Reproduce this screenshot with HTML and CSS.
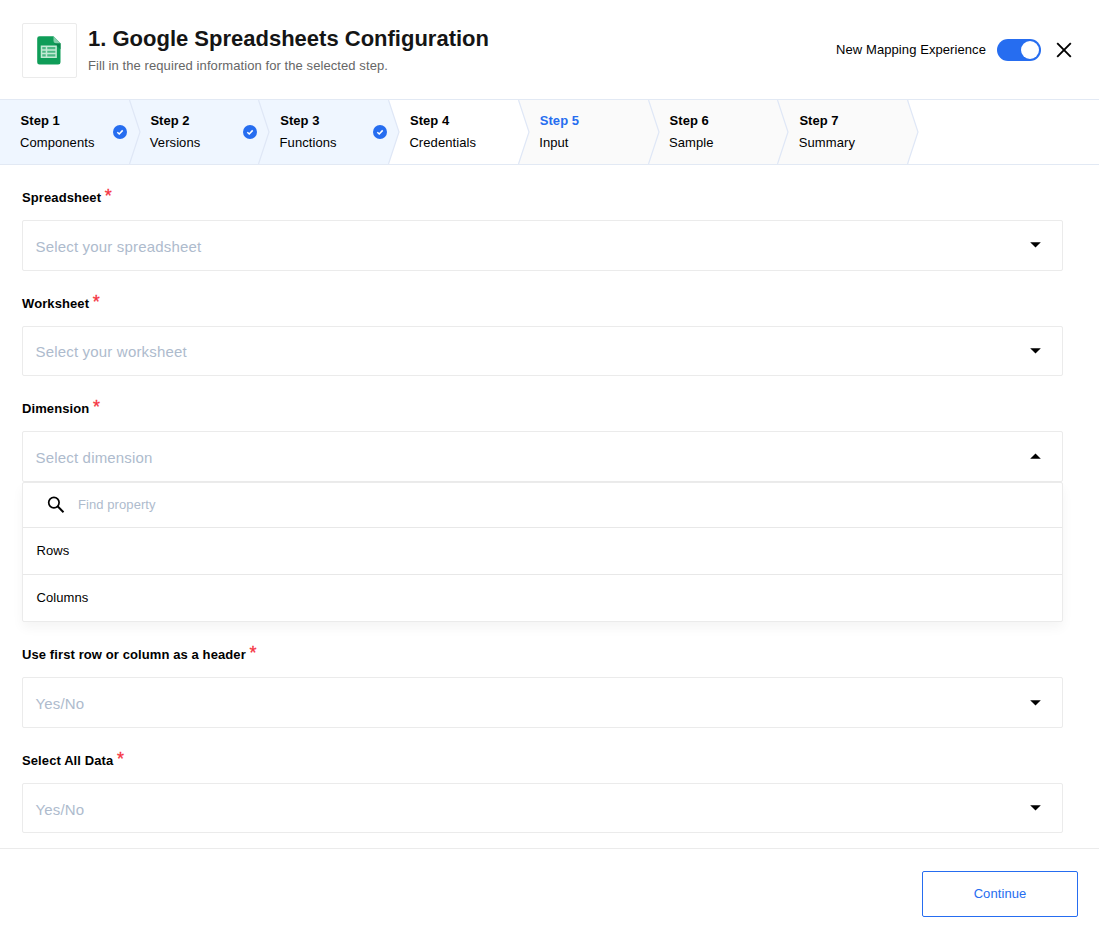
FILE: index.html
```html
<!DOCTYPE html>
<html lang="en">
<head>
<meta charset="utf-8">
<title>Google Spreadsheets Configuration</title>
<link rel="stylesheet" href="styles.css">
</head>
<body>
<svg class="defs" width="0" height="0">
  <symbol id="check" viewBox="0 0 13 13"><circle cx="6.5" cy="6.5" r="6.5" fill="#266df0"/><path d="M4 6.7 5.8 8.4 9 5" fill="none" stroke="#fff" stroke-width="1.4"/></symbol>
  <symbol id="caret" viewBox="0 0 11 6"><path d="M0.2 0.2H10.8L5.5 5.6Z" fill="#000"/></symbol>
  <symbol id="chevron" viewBox="0 0 12 64"><path d="M0 0H.5L11 32 .5 64H0Z" fill="currentColor"/><path d="M0.5 0 11 32 0.5 64" fill="none" stroke="#dfe7f6" stroke-width="1.2"/></symbol>
</svg>
<header class="header">
  <div class="logo">
    <svg width="24" height="29" viewBox="0 0 24 29"><path d="M2.5.3H16.5L23.5 7.2V26.3a2.3 2.3 0 0 1-2.3 2.3H2.5A2.3 2.3 0 0 1 .2 26.3V2.6A2.3 2.3 0 0 1 2.5.3Z" fill="#0f9d58"/><path d="M17 7.2 23.5 13.3V7.2Z" fill="#08834b"/><path d="M16.5.3V5.1a2.1 2.1 0 0 0 2.1 2.1H23.5Z" fill="#87ceac"/><path d="M4.5 10.3h14.6v11H4.5ZM4.5 14h14.6M4.5 17.6h14.6M9.5 10.3v11" fill="#4db885" stroke="#c3ead4" stroke-width="1.5"/></svg>
  </div>
  <div class="heading">
    <h1 class="title">1. Google Spreadsheets Configuration</h1>
    <p class="subtitle">Fill in the required information for the selected step.</p>
  </div>
  <span class="mapping">New Mapping Experience</span>
  <span class="toggle"><span class="knob"></span></span>
  <svg class="close" width="16" height="16" viewBox="0 0 16 16"><path d="M1.2 1.2 14.8 14.8M14.8 1.2 1.2 14.8" stroke="#000" stroke-width="1.9"/></svg>
</header>
<nav class="steps">
  <div class="step done"><div class="step-text"><b>Step 1</b><span>Components</span></div><svg class="check"><use href="#check"/></svg><svg class="chev"><use href="#chevron"/></svg></div>
  <div class="step done"><div class="step-text"><b>Step 2</b><span>Versions</span></div><svg class="check"><use href="#check"/></svg><svg class="chev"><use href="#chevron"/></svg></div>
  <div class="step done"><div class="step-text"><b>Step 3</b><span>Functions</span></div><svg class="check"><use href="#check"/></svg><svg class="chev"><use href="#chevron"/></svg></div>
  <div class="step open"><div class="step-text"><b>Step 4</b><span>Credentials</span></div><svg class="chev"><use href="#chevron"/></svg></div>
  <div class="step"><div class="step-text"><b class="current">Step 5</b><span>Input</span></div><svg class="chev"><use href="#chevron"/></svg></div>
  <div class="step"><div class="step-text"><b>Step 6</b><span>Sample</span></div><svg class="chev"><use href="#chevron"/></svg></div>
  <div class="step"><div class="step-text"><b>Step 7</b><span>Summary</span></div><svg class="chev"><use href="#chevron"/></svg></div>
</nav>
<main class="form">
  <section class="field"><div class="label">Spreadsheet <i>*</i></div><div class="select">Select your spreadsheet<svg class="caret"><use href="#caret"/></svg></div></section>
  <section class="field"><div class="label">Worksheet <i>*</i></div><div class="select">Select your worksheet<svg class="caret"><use href="#caret"/></svg></div></section>
  <section class="field expanded"><div class="label">Dimension <i>*</i></div><div class="select">Select dimension<svg class="caret up"><use href="#caret"/></svg></div>
    <div class="menu">
      <div class="search"><svg width="18" height="18" viewBox="0 0 18 18"><circle cx="6.9" cy="6.6" r="5.2" fill="none" stroke="#000" stroke-width="1.7"/><path d="M10.6 10.3 16.5 16.2" stroke="#000" stroke-width="2"/></svg>Find property</div>
      <div class="option">Rows</div>
      <div class="option">Columns</div>
    </div>
  </section>
  <section class="field"><div class="label">Use first row or column as a header <i>*</i></div><div class="select">Yes/No<svg class="caret"><use href="#caret"/></svg></div></section>
  <section class="field"><div class="label">Select All Data <i>*</i></div><div class="select">Yes/No<svg class="caret"><use href="#caret"/></svg></div></section>
</main>
<footer class="footer"><button class="continue">Continue</button></footer>
</body>
</html>
```
FILE: styles.css
```css
* { box-sizing: border-box; }
body { margin: 0; height: 938px; overflow: hidden; display: flex; flex-direction: column; background: #fff; color: #000; font: 13px/16px "Liberation Sans", Arial, sans-serif; letter-spacing: 0.08px; }
.defs { position: absolute; }
.header { height: 99px; flex: none; display: flex; align-items: center; padding: 0 27px 0 22px; }
.logo { width: 55px; height: 55px; margin-top: 2px; padding-right: 1px; border: 1px solid #ebebeb; border-radius: 2px; display: flex; align-items: center; justify-content: center; }
.heading { margin-left: 11px; flex: 1; }
.title { margin: 0; font-size: 22px; line-height: 26px; letter-spacing: 0; color: #151515; }
.subtitle { margin: 6px 0 0; color: #666; letter-spacing: 0.08px; }
.mapping { margin-right: 11px; }
.toggle { width: 44px; height: 22px; margin: 1px 15px 0 0; padding: 2px; border-radius: 11px; background: #266df0; display: flex; justify-content: flex-end; }
.knob { width: 18px; height: 18px; border-radius: 50%; background: #fff; }
.close { margin-top: 1px; }
.steps { height: 66px; flex: none; display: flex; border: solid #e2e9f4; border-width: 1px 0; }
.step { position: relative; width: 129.8px; height: 64px; padding: 13px 0 0 20px; background: #fafafa; color: #fafafa; }
.step.done { background: #eff6ff; color: #eff6ff; }
.step.open { background: #fff; color: #fff; }
.step-text { display: flex; flex-direction: column; gap: 6px; color: #000; }
.step-text b { margin-left: 0.6px; letter-spacing: 0.04px; }
.step-text .current { color: #266df0; }
.check { position: absolute; left: 113px; top: 25px; width: 14px; height: 14px; }
.chev { position: absolute; z-index: 1; left: 128.5px; top: 0; width: 12px; height: 64px; }
.form { height: 683px; flex: none; padding: 24.1px 36px 0 22px; }
.field { height: 105.6px; }
.field.expanded { height: 246px; }
.label { height: 31px; padding-top: 0.9px; font-weight: bold; letter-spacing: 0.1px; }
.label i { font: 18px/10px "Liberation Sans", Arial, sans-serif; -webkit-text-stroke: 0.3px #f5333f; color: #f5333f; letter-spacing: 0; }
.select { height: 50.5px; padding: 2.8px 21px 0 12.5px; display: flex; align-items: center; justify-content: space-between; border: 1px solid #ebebeb; border-radius: 2px; font-size: 15px; letter-spacing: 0.18px; color: #aebbcd; }
.caret { width: 11px; height: 6px; margin-top: -2.5px; }
.caret.up { transform: rotate(180deg); margin-top: -4.5px; }
.menu { height: 140.3px; border: 1px solid #ebebeb; border-radius: 2px; box-shadow: 0 6px 12px rgba(0, 0, 0, .045); background: #fff; }
.search { height: 44px; padding-left: 24px; display: flex; align-items: center; gap: 13px; color: #aebbcd; }
.option { height: 47px; padding: 15px 13.5px; border-top: 1px solid #e8e8e8; }
.footer { flex: 1; padding: 22px 21px; border-top: 1px solid #ebebeb; display: flex; justify-content: flex-end; align-items: flex-start; }
.continue { width: 156px; height: 46px; border: 1px solid #266df0; border-radius: 2px; background: #fff; color: #266df0; font: inherit; letter-spacing: inherit; }
```
